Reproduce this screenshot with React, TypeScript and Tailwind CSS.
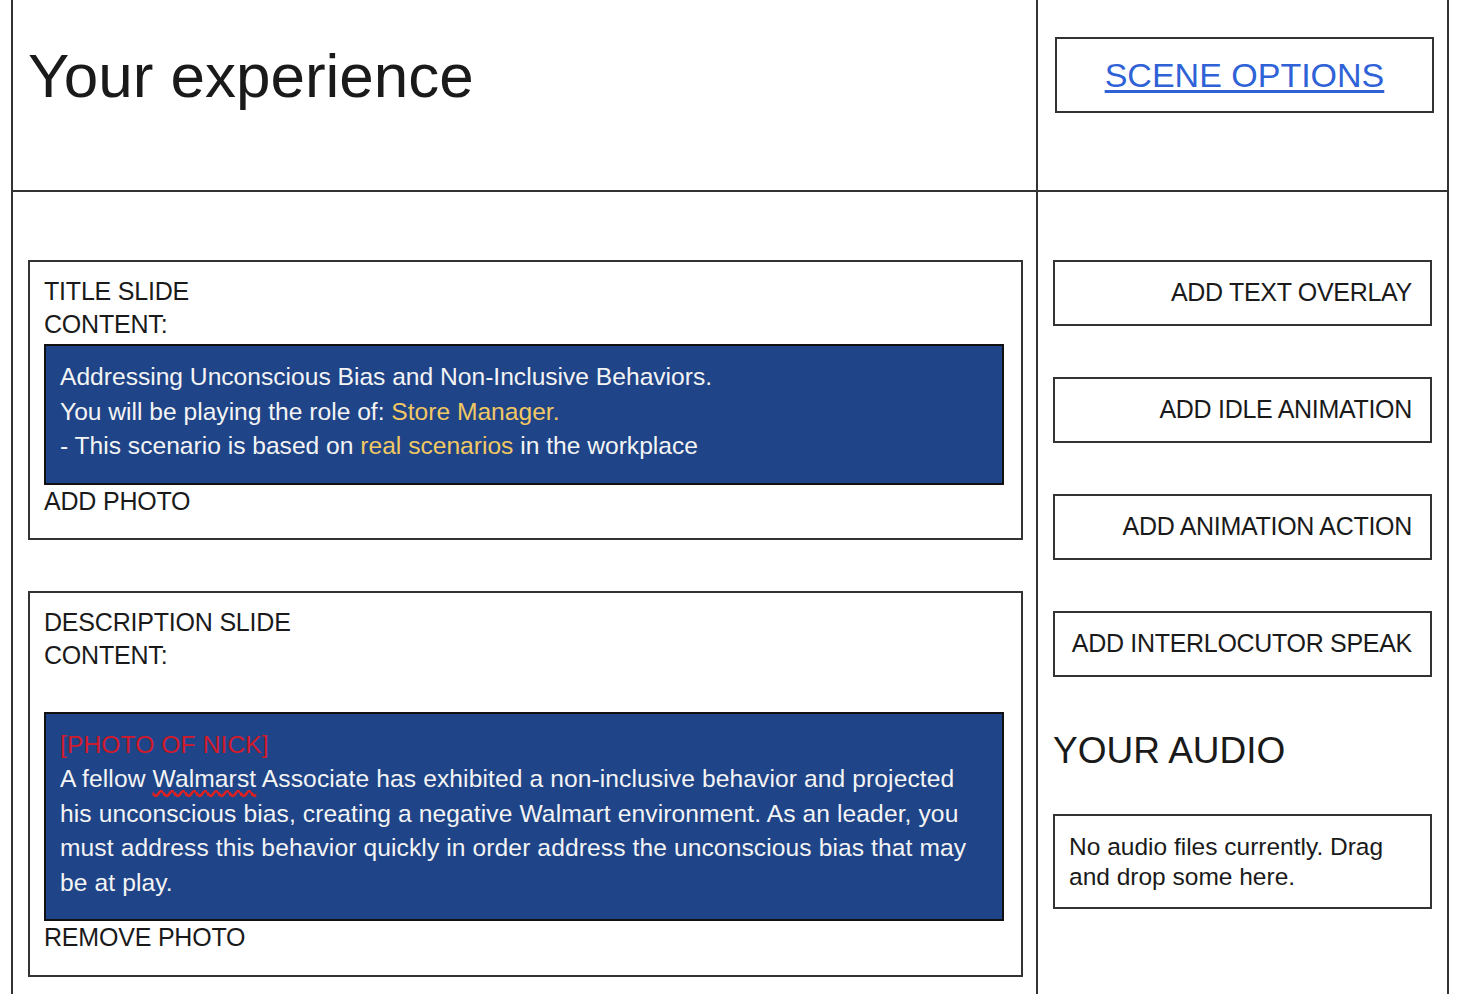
export default function App() {
    const font = { fontFamily: '"Liberation Sans", Arial, sans-serif' };

    const actions = ["ADD TEXT OVERLAY", "ADD IDLE ANIMATION", "ADD ANIMATION ACTION", "ADD INTERLOCUTOR SPEAK"];

    return (
        <div style={font} className="w-full h-[994px] overflow-hidden bg-white text-[#1a1a1a]">
            <div className="ml-[11px] w-[1438px] h-full border-x-2 border-[#333]">
                {/* header row */}
                <div className="flex h-[192px] border-b-2 border-[#333]">
                    <div className="w-[1023px] pl-[15px] pt-[40px]">
                        <h1 className="text-[62px] leading-[71px]">Your experience</h1>
                    </div>
                    <div className="flex-1 border-l-2 border-[#333] pl-[17px] pt-[37px]">
                        <div className="w-[379px] h-[76px] border-2 border-[#333] flex items-center justify-center">
                            <a href="#" className="text-[34px] leading-none text-[#2f62d6] underline underline-offset-[3px]">SCENE OPTIONS</a>
                        </div>
                    </div>
                </div>

                {/* body row */}
                <div className="flex h-[802px]">
                    <div className="w-[1023px] pl-[15px] pt-[68px] text-[25px] tracking-[-0.2px]">
                        <div className="w-[995px] border-2 border-[#333] pl-[14px] pt-[13px] pb-[20px]">
                            <p className="leading-[33px]">TITLE SLIDE</p>
                            <p className="leading-[33px]">CONTENT:</p>
                            <div className="mt-[3px] w-[960px] bg-[#1f4488] border-2 border-[#111] pl-[14px] pt-[14px] pb-[19px] text-[24.6px] leading-[34.5px] tracking-normal text-[#f4f4f4]">
                                <p>Addressing Unconscious Bias and Non-Inclusive Behaviors.</p>
                                <p>You will be playing the role of: <span className="text-[#f1c863]">Store Manager.</span></p>
                                <p>- This scenario is based on <span className="text-[#f1c863]">real scenarios</span> in the workplace</p>
                            </div>
                            <p className="leading-[33px]">ADD PHOTO</p>
                        </div>

                        <div className="mt-[51px] w-[995px] border-2 border-[#333] pl-[14px] pt-[13px] pb-[21px]">
                            <p className="leading-[33px]">DESCRIPTION SLIDE</p>
                            <p className="leading-[33px]">CONTENT:</p>
                            <div className="mt-[40px] w-[960px] bg-[#1f4488] border-2 border-[#111] pl-[14px] pt-[14px] pb-[19px] text-[24.6px] leading-[34.5px] tracking-[0.1px] text-[#f4f4f4]">
                                <p className="text-[#d11a2a]">[PHOTO OF NICK]</p>
                                <p className="whitespace-nowrap">
                                    A fellow <span className="underline decoration-wavy decoration-[#e02020] underline-offset-[3px]">Walmarst</span> Associate has exhibited a non-inclusive behavior and projected
                                    <br />
                                    his unconscious bias, creating a negative Walmart environment. As an leader, you
                                    <br />
                                    must address this behavior quickly in order address the unconscious bias that may
                                    <br />
                                    be at play.
                                </p>
                            </div>
                            <p className="leading-[33px]">REMOVE PHOTO</p>
                        </div>
                    </div>

                    <div className="flex-1 border-l-2 border-[#333] pl-[15px] pt-[68px]">
                        <div className="flex flex-col gap-[51px]">
                            {actions.map((a) => (
                                <div key={a} className="w-[379px] h-[66px] border-2 border-[#333] pl-[20px] pr-[18px] flex items-center justify-end">
                                    <span className="text-[25px] tracking-[-0.3px] whitespace-nowrap">{a}</span>
                                </div>
                            ))}
                        </div>
                        <h2 className="mt-[52px] text-[37px] leading-[44px]">YOUR AUDIO</h2>
                        <div className="mt-[41px] w-[379px] border-2 border-[#333] pl-[14px] pr-[20px] pt-[16px] pb-[15px] text-[24.5px] leading-[30px]">
                            No audio files currently. Drag and drop some here.
                        </div>
                    </div>
                </div>
            </div>
        </div>
    );
}
